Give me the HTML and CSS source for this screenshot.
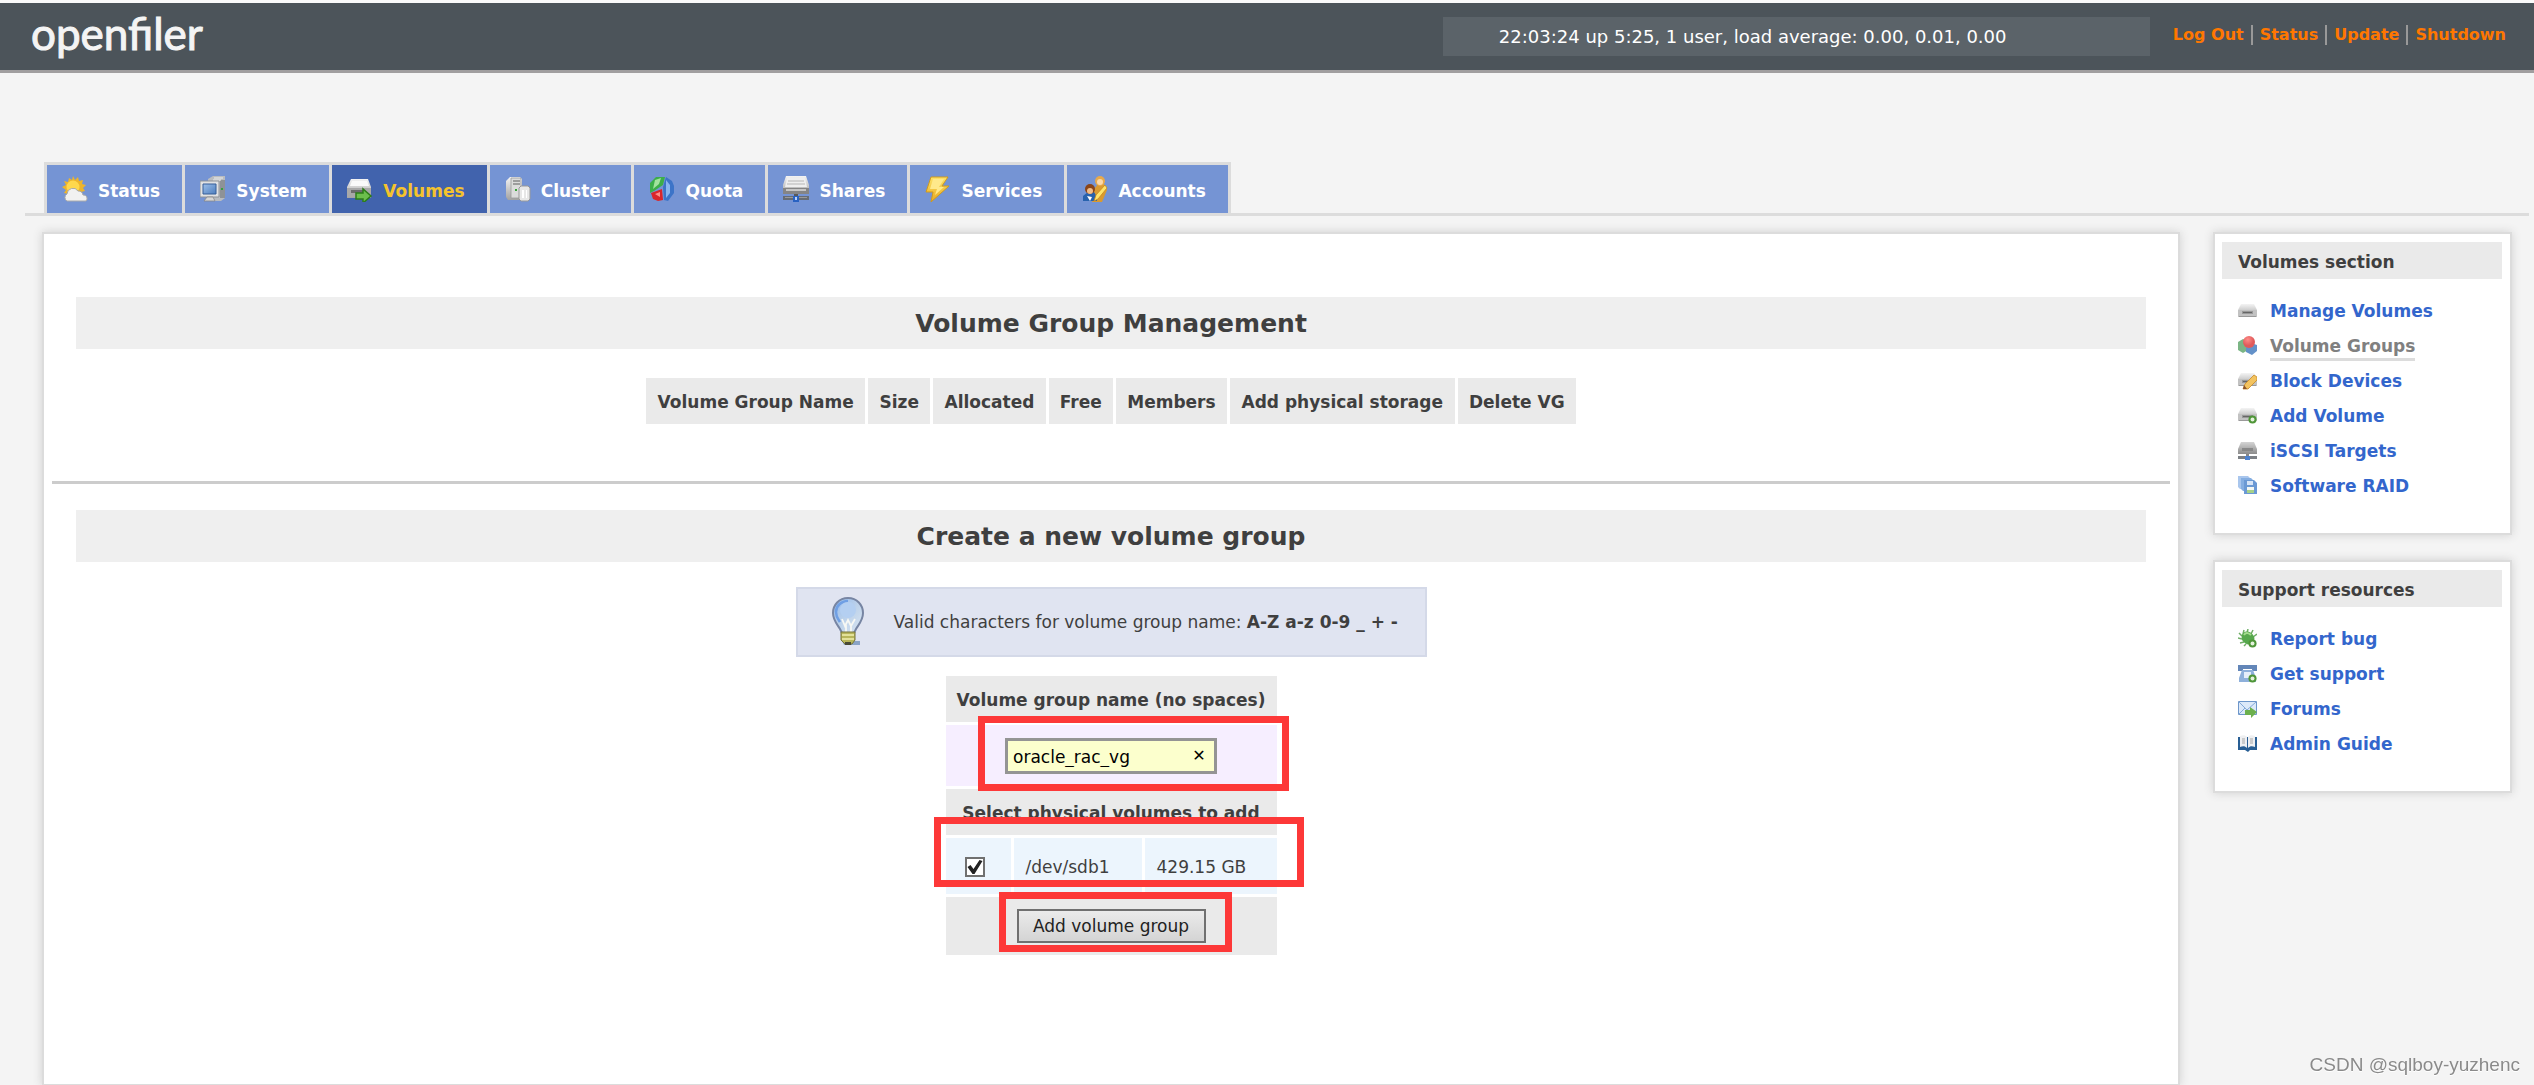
FILE: index.html
```html
<!DOCTYPE html>
<html lang="en">
<head>
<meta charset="utf-8">
<title>Openfiler - Volume Group Management</title>
<link rel="stylesheet" href="styles.css">
</head>
<body>
<svg class="defs" aria-hidden="true">
  <defs>
    <linearGradient id="metal" x1="0" y1="0" x2="0" y2="1"><stop offset="0" stop-color="#f4f4f4"/><stop offset="1" stop-color="#a2a2a2"/></linearGradient>
    <linearGradient id="dark" x1="0" y1="0" x2="0" y2="1"><stop offset="0" stop-color="#d4d4d4"/><stop offset="1" stop-color="#8c8c8c"/></linearGradient>
    <linearGradient id="screen" x1="0" y1="0" x2="1" y2="1"><stop offset="0" stop-color="#9dc0ea"/><stop offset="1" stop-color="#4d7dbd"/></linearGradient>
    <linearGradient id="gold" x1="0" y1="0" x2="0" y2="1"><stop offset="0" stop-color="#fde36a"/><stop offset="1" stop-color="#e9a91c"/></linearGradient>
    <radialGradient id="red" cx=".4" cy=".3"><stop offset="0" stop-color="#ff8c88"/><stop offset="1" stop-color="#e05a5a"/></radialGradient>
    <linearGradient id="glass" x1="0" y1="0" x2="1" y2="1"><stop offset="0" stop-color="#8fb8ee"/><stop offset=".5" stop-color="#bdd2ea"/><stop offset="1" stop-color="#dbe6f2"/></linearGradient>
    <symbol id="drive" viewBox="0 0 19 19">
      <path d="M3 3h13l3 6v7H0V9z" fill="url(#metal)"/>
      <path d="M0 9h19v7H0z" fill="#c2c2c2"/><path d="M4 10h11v3H4z" fill="#999"/><path d="M5 11h9v1H5z" fill="#666"/><path d="M1 15h17v1H1z" fill="#9a9a9a"/>
    </symbol>
    <symbol id="plus" viewBox="0 0 10 10"><circle cx="5" cy="5" r="4.500" fill="#4f9638"/><circle cx="5" cy="5" r="2.200" fill="#e4f1dc"/></symbol>
  </defs>
</svg>

<header class="topbar">
  <a class="logo" href="#">openfiler</a>
  <div class="uptime">22:03:24 up 5:25, 1 user, load average: 0.00, 0.01, 0.00</div>
  <nav class="session" aria-label="Session">
    <a href="#">Log Out</a><a href="#">Status</a><a href="#">Update</a><a href="#">Shutdown</a>
  </nav>
</header>

<div class="tabrow">
  <nav class="tabs" aria-label="Sections">
    <a class="tab" href="#"><svg class="tabicon" viewBox="0 0 26 26"><path d="M11 0l2 4 3-3 1 4 4-1-1 4 4 1-3 3 2 3-4 1-8 6-5 0 0-4-4-1 2-3-4-3 4-2-2-4 4 1 1-4 3 2z" fill="#edb52c"/><circle cx="11" cy="11" r="6.500" fill="#ffd84d"/><path d="M5 25a4 4 0 0 1 0-7 6 6 0 0 1 11-3 5 5 0 0 1 5 4 3.500 3.500 0 0 1 3 6z" fill="#f1f1f1" stroke="#aaa" stroke-width="1"/></svg>Status</a>
    <a class="tab" href="#"><svg class="tabicon" viewBox="0 0 26 26"><path d="M8 3l5-3h12v22l-4 3H8z" fill="#b9bcc0"/><path d="M20 4h5v18h-5z" fill="#8e9297"/><path d="M14 2h9M13 4h8" stroke="#eee"/><path d="M21 12h2v2h-2z" fill="#35a03b"/><path d="M0 5h19v16H0z" fill="#e1e2e3" stroke="#8e9297"/><path d="M3 8h13v10H3z" fill="url(#screen)" stroke="#375f98"/><path d="M7 21h6l2 4H4z" fill="#d5d5d5" stroke="#888" stroke-width=".8"/></svg>System</a>
    <a class="tab active" href="#" aria-current="page"><svg class="tabicon" viewBox="0 0 26 26"><path d="M4 3h17l3 8v11H0V11z" fill="url(#metal)"/><path d="M5 5h15l2 5H3z" fill="#fafafa"/><path d="M0 12h24v9H0z" fill="#a8a8a8"/><path d="M4 14h13v3H4z" fill="#6c6c6c"/><path d="M9 17h7v-4l8 7-8 7v-4H9z" fill="#6cbf4c" stroke="#2c7d18" stroke-width="1.500"/></svg>Volumes</a>
    <a class="tab" href="#"><svg class="tabicon" viewBox="0 0 26 26"><path d="M1 5l4-4h10l2 2v18l-3 3H3l-2-3z" fill="url(#metal)"/><path d="M6 2h10v20H6z" fill="#dcdcdc" stroke="#999" stroke-width=".8"/><path d="M8 5h7M8 8h7" stroke="#888" stroke-width="1.500"/><path d="M10 13h2v2h-2z" fill="#3aa43a"/><path d="M14 12l2-2h7l2 2v11l-2 2h-7l-2-2z" fill="#e7e7e7" stroke="#999"/><path d="M17 14h2v8h-2zM21 14h1v8h-1z" fill="#fff"/></svg>Cluster</a>
    <a class="tab" href="#"><svg class="tabicon" viewBox="0 0 26 26"><path d="M1 7l6-6h9l-2 8-9 6-4 2z" fill="#3cae4a"/><path d="M6 4l6-2-2 6-6 5z" fill="#a2e39e"/><path d="M17 1l6 4 2 5v7l-6 8-4-1-1-13z" fill="#3c74c8"/><path d="M17 4l4 5v8l-4 5z" fill="#89b5ef"/><path d="M2 17l11-4 1 11-5 1-5-2z" fill="#d9262b"/><path d="M6 18l5-2v5z" fill="#ff8d87"/></svg>Quota</a>
    <a class="tab" href="#"><svg class="tabicon" viewBox="0 0 26 26"><path d="M3 0h20l3 9v9H0V9z" fill="url(#metal)"/><path d="M4 2h18l2 9H2z" fill="#efefef"/><path d="M5 5h16M4 8h18" stroke="#b5b5b5"/><path d="M0 12h26v6H0z" fill="#858585"/><path d="M3 13h20v2H3z" fill="#c5c5c5"/><path d="M0 20h26v4H0z" fill="#666c74"/><path d="M2 21h22v1H2z" fill="#999"/><path d="M11 18h4v2h-4z" fill="#5a5a5a"/><path d="M10 20h6v6h-6z" fill="#2962c2"/><path d="M12 21h2v3h-2z" fill="#b7d1fa"/></svg>Shares</a>
    <a class="tab" href="#"><svg class="tabicon" viewBox="0 0 26 26"><path d="M6 1h17l-6 9h7L6 26l2-10H1z" fill="url(#gold)" stroke="#cf9a1f"/><path d="M8 3h11l-5 8h5l-9 8 2-6H5z" fill="#ffe98b"/></svg>Services</a>
    <a class="tab" href="#"><svg class="tabicon" viewBox="0 0 26 26"><path d="M12 13l4-5h6l3 6-5 12H10z" fill="#d99a31"/><circle cx="18" cy="5" r="5" fill="#e7a94c"/><circle cx="18" cy="6" r="3" fill="#fbd9aa"/><path d="M1 25v-5l5-4h6l3 5v4z" fill="#2862ad"/><circle cx="8" cy="13" r="5" fill="#8b4519"/><circle cx="8" cy="15" r="3" fill="#f1bd8a"/><path d="M12 25l2-6 9-10 2 3-9 11z" fill="#ffe36a" stroke="#c8891d" stroke-width=".8"/><path d="M5 20l3 5 2-4z" fill="#fff"/></svg>Accounts</a>
  </nav>
</div>

<div class="layout">
  <main class="panel content">
    <h1 class="heading">Volume Group Management</h1>
    <table class="grid groups">
      <thead><tr><th>Volume Group Name</th><th>Size</th><th>Allocated</th><th>Free</th><th>Members</th><th>Add physical storage</th><th>Delete VG</th></tr></thead>
    </table>
    <hr class="rule">
    <h2 class="heading">Create a new volume group</h2>
    <div class="hint">
      <svg class="bulb" viewBox="0 0 34 50"><path d="M10 44h18v4H12z" fill="#8aa3c6"/><path d="M16 1C7 1 1 8 1 16c0 7 4 11 7 16l2 4h12l2-4c3-5 7-9 7-16C31 8 25 1 16 1z" fill="url(#glass)" stroke="#7785a3" stroke-width="2"/><path d="M16 4C9 4 4 9 4 15c0 5 2 7 4 10" fill="none" stroke="#6f9fe4" stroke-width="2.500"/><circle cx="16" cy="13" r="8" fill="#b4cff1"/><path d="M10 22l3 7 3-6 3 6 4-7M14 28v8M19 28v8" fill="none" stroke="#f7f8f4" stroke-width="1.800"/><path d="M9 35h14v8l-3 4h-7l-4-4z" fill="#b8b65a" stroke="#77753a"/><path d="M10 38h12M10 42h12" stroke="#f1efae" stroke-width="1.500"/><path d="M13 45h6v3h-6z" fill="#4a4a35"/></svg>
      <p>Valid characters for volume group name: <strong>A-Z a-z 0-9 _ + -</strong></p>
    </div>
    <form class="create">
      <table class="grid newgroup">
        <colgroup><col class="c-check"><col class="c-dev"><col class="c-size"></colgroup>
        <tbody>
          <tr><th colspan="3"><label for="vgname">Volume group name (no spaces)</label></th></tr>
          <tr class="namerow"><td colspan="3"><div class="field"><input id="vgname" type="text" value="oracle_rac_vg"><button type="button" class="clear" aria-label="Clear">✕</button></div></td></tr>
          <tr><th colspan="3">Select physical volumes to add</th></tr>
          <tr class="volrow"><td class="tick"><input id="sdb1" type="checkbox" checked></td><td><label for="sdb1">/dev/sdb1</label></td><td>429.15 GB</td></tr>
          <tr class="submitrow"><td colspan="3"><button type="submit" class="submit">Add volume group</button></td></tr>
        </tbody>
      </table>
      <div class="mark mark-name"></div>
      <div class="mark mark-volume"></div>
      <div class="mark mark-submit"></div>
    </form>
  </main>

  <aside class="side">
    <section class="panel box">
      <h2>Volumes section</h2>
      <ul>
        <li><svg class="ico" viewBox="0 0 19 19"><use href="#drive"/></svg><a href="#">Manage Volumes</a></li>
        <li><svg class="ico" viewBox="0 0 19 19"><path d="M0 6l5-3 5 2v9l-5 3-5-3z" fill="#7bb585"/><path d="M8 10l5-3 6 2v6l-5 4-6-3z" fill="#6391c9"/><circle cx="11" cy="6" r="6" fill="url(#red)"/></svg><a class="current" href="#">Volume Groups</a></li>
        <li><svg class="ico" viewBox="0 0 19 19"><use href="#drive" y="-1"/><path d="M5 18l2-5L16 4l3 2v3l-9 9z" fill="#f3c35f" stroke="#c88a27" stroke-width=".8"/><path d="M5 18l1-4 3 4z" fill="#8b542b"/></svg><a href="#">Block Devices</a></li>
        <li><svg class="ico" viewBox="0 0 19 19"><use href="#drive" y="-1"/><use href="#plus" x="10" y="9" width="9" height="9"/></svg><a href="#">Add Volume</a></li>
        <li><svg class="ico" viewBox="0 0 19 19"><path d="M3 1h13l3 7v5H0V8z" fill="url(#dark)"/><path d="M4 7h11v3H4z" fill="#888"/><path d="M0 15h19v3H0z" fill="#7c8085"/><path d="M8 13h3v2H8z" fill="#888"/><path d="M7 15h5v4H7z" fill="#4d82cf"/></svg><a href="#">iSCSI Targets</a></li>
        <li><svg class="ico" viewBox="0 0 19 19"><path d="M0 0h10l2 2v11H2l-2-2z" fill="#a9c6ed"/><path d="M3 2h10l2 2v11H5l-2-2z" fill="#85aee1"/><path d="M6 4h10l3 3v11H6z" fill="#6b99d4"/><path d="M9 5h6v4H9z" fill="#d7e5f7"/><path d="M9 11h7v6H9z" fill="#f4f7f2"/><path d="M9 14h7v3H9z" fill="#a6d189"/></svg><a href="#">Software RAID</a></li>
      </ul>
    </section>
    <section class="panel box">
      <h2>Support resources</h2>
      <ul>
        <li><svg class="ico" viewBox="0 0 19 19"><path d="M5 5l1-4M9 4l1-4M13 5l2-4M4 7L1 4M4 10L0 9M6 13l-4 1M15 8l4-3M8 15l-2 2" stroke="#6fae66" stroke-width="1.500"/><ellipse cx="10" cy="9" rx="6" ry="7" transform="rotate(-40 10 9)" fill="#57a84d"/><path d="M6 6c2-3 5-2 7 0" stroke="#a5dc8f" stroke-width="2" fill="none"/><use href="#plus" x="10" y="10" width="9" height="9"/></svg><a href="#">Report bug</a></li>
        <li><svg class="ico" viewBox="0 0 19 19"><path d="M0 1h19v6h-5V5H5v2H0z" fill="#6386b8"/><path d="M4 6h11l3 8v4H1v-4z" fill="#8eb0db"/><path d="M6 8h7v6H6z" fill="#e5eefa"/><use href="#plus" x="10" y="10" width="9" height="9"/></svg><a href="#">Get support</a></li>
        <li><svg class="ico" viewBox="0 0 19 19"><path d="M.5 2.500h18v13H.5z" fill="#dce9f9" stroke="#6d96ca"/><path d="M1 3l8 8 9-8M1 15l6-6" fill="none" stroke="#83a9d8"/><path d="M7 11h5V8l7 5-6 6v-3H7z" fill="#6cb04e"/></svg><a href="#">Forums</a></li>
        <li><svg class="ico" viewBox="0 0 19 19"><path d="M0 3h19v13h-7l-2 2-3-2H0z" fill="#285e94"/><path d="M2 2c3-1 5-1 7 1v11c-2-2-4-2-7-1zM17 2c-3-1-5-1-7 1v11c2-2 4-2 7-1z" fill="#eff0f2"/><path d="M4 5h3M4 7h3M4 9h3M12 5h3M12 7h3M12 9h3" stroke="#a7a7a7"/></svg><a href="#">Admin Guide</a></li>
      </ul>
    </section>
  </aside>
</div>
<div class="credit">CSDN @sqlboy-yuzhenc</div>
</body>
</html>
```
FILE: styles.css
```css
* { box-sizing: border-box; }

body {
  margin: 0;
  background: #f4f4f4;
  color: #3f3f3f;
  font: 17px/24px "DejaVu Sans", Verdana, sans-serif;
}

.defs { position: absolute; width: 0; height: 0; }

a { color: #3366cc; text-decoration: none; }

/* header */
.topbar {
  display: flex;
  align-items: flex-start;
  height: 73px;
  padding-right: 28px;
  border-top: 3px solid #fafafa;
  border-bottom: 3px solid #a09e9f;
  background: #4c545a;
}

.logo {
  flex: 1;
  padding-left: 31px;
  color: #f4f4f4;
  font: 44px/60px Lato, sans-serif;
  -webkit-text-stroke: 1px #f4f4f4;
}

.uptime {
  width: 707px;
  margin-top: 14px;
  padding: 8px 56px 7px;
  background: #5b6369;
  color: #fff;
  font-size: 18px;
  white-space: nowrap;
}

.session {
  display: flex;
  margin-top: 22px;
  margin-left: 23px;
}

.session a {
  padding: 0 7px;
  color: #ff7700;
  font-weight: bold;
  font-size: 16px;
  line-height: 20px;
}

.session a + a { border-left: 2px solid #999; }
.session a:first-child { padding-left: 0; }
.session a:last-child { padding-right: 0; }

/* section tabs */
.tabrow {
  display: flex;
  margin: 89px 5px 0 25px;
  padding-left: 19px;
  border-bottom: 3px solid #dcdcdc;
}

.tabs {
  display: flex;
  gap: 3px;
  width: 1187px;
  padding: 3px 3px 0;
  background: #dcdcdc;
}

.tab {
  display: flex;
  flex: 1 0 auto;
  align-items: center;
  height: 48px;
  padding: 4px 20px 0 15px;
  background: #7594d4;
  color: #fff;
  font-weight: bold;
}

.tab.active { background: #4163ad; color: #f5c32c; }

.tabicon { width: 26px; height: 26px; margin: 0 10px 4px 0; }

/* page columns */
.layout {
  display: flex;
  align-items: flex-start;
  gap: 33px;
  padding: 16px 22px 0 42px;
}

.panel {
  border: 2px solid #dcdcdc;
  background: #fff;
  box-shadow: 0 0 9px #d0d0d0;
}

.content {
  flex: 1;
  padding: 63px 8px 126px;
}

.heading {
  margin: 0 24px;
  padding: 15px 0 13px;
  background: #efefef;
  font-size: 25px;
  line-height: 24px;
  text-align: center;
}

.grid {
  margin: 0 auto;
  border-spacing: 3px;
}

.grid th {
  height: 46px;
  padding: 2px 11px 0;
  background: #eaeaea;
  white-space: nowrap;
}

.groups { width: 936px; margin-top: 26px; }

.rule {
  height: 3px;
  margin: 54px 0 26px;
  border: 0;
  background: #ccc;
}

.hint {
  display: flex;
  align-items: center;
  width: 631px;
  height: 70px;
  margin: 25px auto 0;
  padding-left: 34px;
  border: 2px solid #d4d9e8;
  background: #e0e4f1;
}

.hint p { margin: 0 0 0 28px; white-space: nowrap; }
.bulb { width: 34px; height: 50px; }

.create {
  position: relative;
  width: 337px;
  margin: 16px auto 0;
}

.newgroup { width: 337px; table-layout: fixed; }
.newgroup td { padding: 0 12px; }
.c-check { width: 65px; }
.c-dev { width: 128px; }

.namerow td { height: 61px; background: #f6eeff; }

.field { position: relative; width: 212px; margin: 0 auto; }

.field input {
  display: block;
  width: 212px;
  height: 36px;
  padding: 3px 32px 0 5px;
  border: 3px solid #949494;
  background: #fcffcd;
  color: #000;
  font: inherit;
}

.clear {
  position: absolute;
  top: 6px;
  right: 6px;
  width: 24px;
  height: 24px;
  padding: 0;
  border: 0;
  background: none;
  color: #000;
  font: bold 16px/24px "DejaVu Sans", sans-serif;
}

.newgroup .volrow td { height: 56px; padding-top: 2px; background: #ecf5fd; }

.newgroup .tick { padding: 0 0 0 19px; }

.tick input {
  display: block;
  appearance: none;
  width: 20px;
  height: 20px;
  margin: 0;
  border: 2px solid #707070;
  background: #fff;
}

.tick input:checked::before {
  content: "";
  display: block;
  width: 16px;
  height: 16px;
  background: #222;
  clip-path: polygon(1px 8px, 4px 6px, 7px 10px, 13px 1px, 16px 2px, 8px 15px, 6px 15px);
}

.submitrow td { height: 58px; background: #eaeaea; text-align: center; }

.submit {
  width: 189px;
  height: 34px;
  padding: 0;
  border: 2px solid #707070;
  background: linear-gradient(#ebebeb, #d4d4d4);
  color: #222;
  font: inherit;
  vertical-align: middle;
}

/* highlight frames laid over the form */
.mark {
  position: absolute;
  border: 7px solid #fd3838;
  pointer-events: none;
}

.mark-name { left: 35px; top: 43px; width: 311px; height: 75px; }
.mark-volume { left: -9px; top: 144px; width: 370px; height: 70px; }
.mark-submit { left: 56px; top: 219px; width: 233px; height: 60px; }

/* right column */
.side {
  display: flex;
  flex-direction: column;
  gap: 25px;
  width: 299px;
}

.box { padding: 8px 8px 30px 7px; }

.box h2 {
  margin: 0;
  padding: 8px 16px 5px;
  background: #eaeaea;
  font-size: 17px;
  line-height: 24px;
}

.box ul {
  margin: 14px 0 0;
  padding: 0 0 0 16px;
  list-style: none;
}

.box li {
  display: flex;
  align-items: center;
  gap: 13px;
  height: 35px;
  font-weight: bold;
}

.ico { width: 19px; height: 19px; }

.box .current {
  margin-top: 3px;
  border-bottom: 3px solid #dcdcdc;
  color: #808080;
}

.credit {
  position: fixed;
  right: 14px;
  bottom: 8px;
  color: #8a8a8a;
  font: 19px/24px "Liberation Sans", Arial, sans-serif;
  text-shadow: 0 1px 0 #fff;
}
```
